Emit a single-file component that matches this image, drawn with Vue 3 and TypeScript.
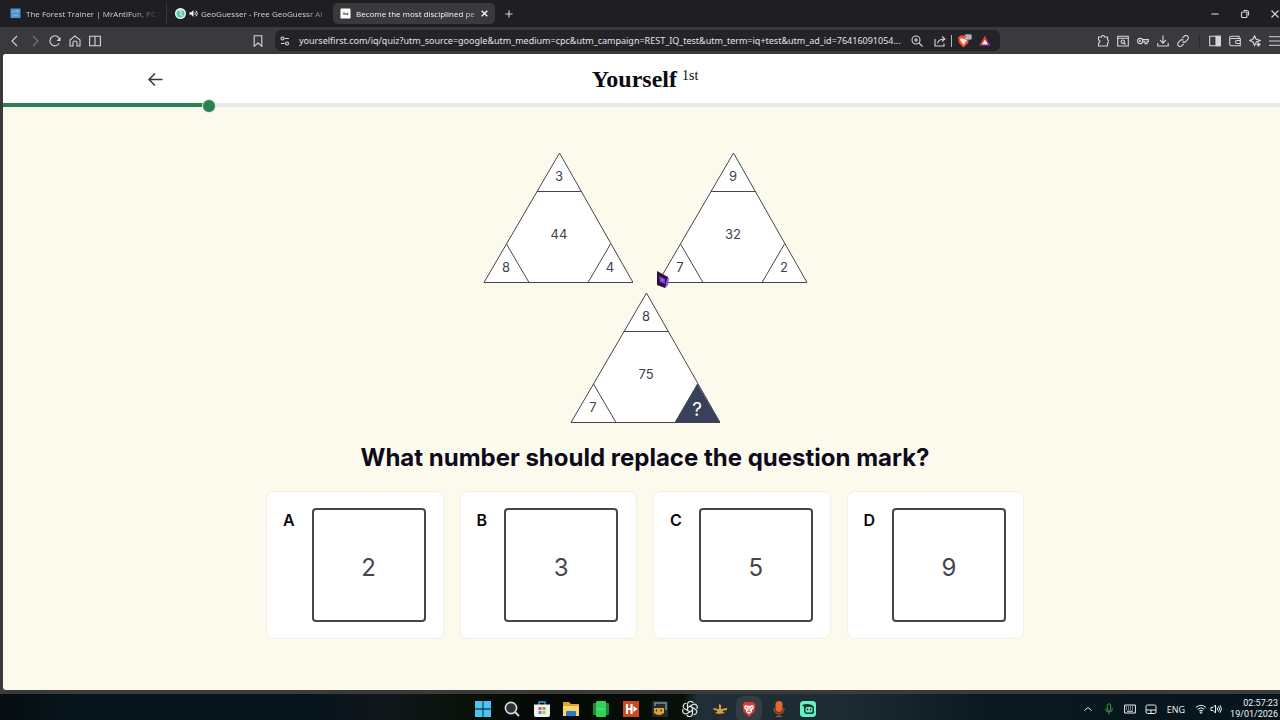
<script setup lang="ts">
import { computed, ref } from 'vue'

interface Puzzle {
  top: string
  left: string
  right: string
  centre: string
}

interface Answer {
  letter: string
  value: string
}

const puzzles: Puzzle[] = [
  { top: '3', left: '8', right: '4', centre: '44' },
  { top: '9', left: '7', right: '2', centre: '32' },
  { top: '8', left: '7', right: '?', centre: '75' },
]

const answers: Answer[] = [
  { letter: 'A', value: '2' },
  { letter: 'B', value: '3' },
  { letter: 'C', value: '5' },
  { letter: 'D', value: '9' },
]

const selected = ref<string | null>(null)
const answered = ref(5)
const total = 31
const progress = computed(() => (answered.value / total) * 100)

const address = ref(
  'yourselfirst.com/iq/quiz?utm_source=google&utm_medium=cpc&utm_campaign=REST_IQ_test&utm_term=iq+test&utm_ad_id=76416091054...',
)
</script>

<template>
  <div class="desktop">
    <div class="browser">
      <div class="tabs">
        <button class="tab first" type="button">
          <svg class="favicon" viewBox="0 0 12 12"><rect x="0.5" y="0.5" width="11" height="10.5" fill="#4d94cf" /><path d="M2 3h3v2H2zM6 2h4v3H6zM3 7h6v2H3z" fill="#6fb0e0" /></svg>
          <span class="tab-title">The Forest Trainer | MrAntiFun, PC Vi</span>
        </button>
        <button class="tab second" type="button">
          <svg class="favicon" viewBox="0 0 12 12"><circle cx="6" cy="6" r="6" fill="#eef8f5" /><circle cx="6" cy="6.3" r="4.4" fill="#5cc9b0" /><path d="M4 2.5 7 4 6 7l2.500 2" fill="none" stroke="#c9ece4" stroke-width="1.300" /></svg>
          <svg class="sound" viewBox="0 0 10 10"><path d="M0.500 3.500h2L5 1v8L2.500 6.500h-2z" fill="#ececee" /><path d="M6.300 3.300c1 1 1 2.400 0 3.400M7.600 1.800c2 1.800 2 4.600 0 6.400" fill="none" stroke="#ececee" stroke-width="1.100" /></svg>
          <span class="tab-title">GeoGuesser - Free GeoGuessr Al</span>
        </button>
        <button class="tab active" type="button">
          <svg class="favicon" viewBox="0 0 12 12"><rect x="0.500" y="0.500" width="11" height="11" rx="1" fill="#fff" /><text x="6" y="8" text-anchor="middle" class="favicon-text">1st</text></svg>
          <span class="tab-title">Become the most disciplined pe</span>
          <svg class="close" viewBox="0 0 8 8"><path d="m1.500 1.500 5 5m0-5-5 5" stroke="#f2f2f2" stroke-width="1.300" /></svg>
        </button>
        <button class="icon-button" type="button" aria-label="New tab">
          <svg viewBox="0 0 12 12"><path d="M6 2.500v7M2.500 6h7" /></svg>
        </button>
        <div class="window-controls">
          <button type="button" aria-label="Minimize"><svg viewBox="0 0 12 12"><path d="M2.500 6h7" /></svg></button>
          <button type="button" aria-label="Restore"><svg viewBox="0 0 12 12"><rect x="2.500" y="4" width="5.500" height="5.500" rx="1" /><path d="M4.500 2.500h3q2 0 2 2v3" /></svg></button>
          <button type="button" aria-label="Close"><svg viewBox="0 0 12 12"><path d="m2.500 2.500 7 7m0-7-7 7" /></svg></button>
        </div>
      </div>

      <div class="toolbar">
        <button class="icon-button" type="button" aria-label="Back"><svg viewBox="0 0 12 12"><path d="M8 1 3 6l5 5" /></svg></button>
        <button class="icon-button dim" type="button" aria-label="Forward"><svg viewBox="0 0 12 12"><path d="m4 1 5 5-5 5" /></svg></button>
        <button class="icon-button" type="button" aria-label="Reload"><svg viewBox="0 0 12 12"><path d="M10.300 8.300A5 5 0 1 1 10.600 4" /><path d="M11.500 2v4H7.500z" fill="#d6d6da" stroke="none" /></svg></button>
        <button class="icon-button" type="button" aria-label="Home"><svg viewBox="0 0 12 12"><path d="M1 5 6 .900 11 5v6H8V7.500q0-1.500-2-1.500t-2 1.500V11H1z" /></svg></button>
        <button class="icon-button" type="button" aria-label="Split view"><svg viewBox="0 0 12 12"><path d="M.600 1.200h10.800v9.600H.600zM6 1.200v9.600" /></svg></button>
        <button class="icon-button bookmark" type="button" aria-label="Bookmark"><svg viewBox="0 0 12 12"><path d="M2.200.800h7.600v10.400L6 8l-3.800 3.200z" /></svg></button>
        <div class="address-bar">
          <button class="icon-button" type="button" aria-label="Site settings"><svg viewBox="0 0 12 12"><path d="M5.500 3.500H10M2 8.500h3.500" /><circle cx="3.500" cy="3.500" r="1.500" /><circle cx="8" cy="8.500" r="1.500" /></svg></button>
          <input v-model="address" type="text" aria-label="Address" />
          <button class="icon-button zoom" type="button" aria-label="Zoom"><svg viewBox="0 0 12 12"><circle cx="5" cy="5" r="4" /><path d="m8 8 3.500 3.500M3 5h4M5 3v4" /></svg></button>
          <button class="icon-button" type="button" aria-label="Share"><svg viewBox="0 0 12 12"><path d="M1 4v7h9V8.500M3.500 8.500C4 5.500 6 4 10.500 4M8 1.300 10.900 4 8 6.700" /></svg></button>
          <span class="divider light"></span>
          <button class="icon-button brave" type="button" aria-label="Shields">
            <svg viewBox="0 0 16 14"><path d="M3.500 1.500h6l2.500 2-.800 5.500-4.700 4.500L2 9 1 3.500z" fill="#f0502c" stroke="none" /><path d="m4 4 2.500 1L9 4l1 2-2 3-1.500 2L5 9 3 6z" fill="#f8e0da" stroke="none" /><rect x="7.500" y="0" width="7.500" height="6" rx="2" fill="#85878c" stroke="none" /><text x="11.300" y="4.800" text-anchor="middle" class="badge">26</text></svg>
          </button>
          <button class="icon-button" type="button" aria-label="Rewards"><svg viewBox="0 0 12 12"><path d="M6 .500 6 4.500 3 9.500.300 11z" fill="#ff4724" stroke="none" /><path d="M6 .500 11.700 11 9 9.500 6 4.500z" fill="#c0246b" stroke="none" /><path d="M.300 11 3 9.500h6l2.700 1.500z" fill="#662d91" stroke="none" /><path d="m6 4.500 3 5H3z" fill="#fff" stroke="none" /></svg></button>
        </div>
        <div class="extensions">
          <button class="icon-button" type="button" aria-label="Extensions"><svg viewBox="0 0 12 12"><path d="M1.500 2h3a1.500 1.500 0 0 1 3 0h3v3a1.500 1.500 0 0 1 0 3v3h-9V8a1.500 1.500 0 0 0 0-3z" /></svg></button>
          <button class="icon-button" type="button" aria-label="Search history"><svg viewBox="0 0 12 12"><path d="M.700 1.200h10.600v9.800H.700zM.700 3.200h10.600" /><circle cx="5.800" cy="6.700" r="1.700" /><path d="m7 8 1.500 1.500" /></svg></button>
          <button class="icon-button" type="button" aria-label="Passwords"><svg viewBox="0 0 12 12"><circle cx="3.200" cy="6" r="2.600" /><circle cx="3" cy="6" r=".500" /><path d="M5.500 4.600h5.900v2.200H10v1.800H8V6.800H5.700" /></svg></button>
          <button class="icon-button" type="button" aria-label="Downloads"><svg viewBox="0 0 12 12"><path d="M6 .500v7.500M3 5.200 6 8.200l3-3M.800 8v3h10.400V8" /></svg></button>
          <button class="icon-button" type="button" aria-label="Copy link"><svg viewBox="0 0 12 12"><path d="m5.200 3.200 1.900-1.900a2.200 2.200 0 0 1 3.500 3.300L8.500 6.800q-1.500 1.200-3 0M6.800 8.800l-1.900 1.900a2.200 2.200 0 0 1-3.500-3.300l2.100-2.200q1.500-1.200 3 0" /></svg></button>
          <span class="divider"></span>
          <button class="icon-button" type="button" aria-label="Sidebar"><svg viewBox="0 0 12 12"><path d="M.700 1.200h10.600v9.600H.700z" /><path d="M7 1.200h4.300v9.600H7z" fill="#d6d6da" /></svg></button>
          <button class="icon-button" type="button" aria-label="Wallet"><svg viewBox="0 0 12 12"><path d="M10 3.500V1.200H2Q.700 1.200.700 2.500V9q0 1.800 1.800 1.800h8.800V3.500H1.500M11.300 5.500H8a1.500 1.500 0 0 0 0 3h3.300" /></svg></button>
          <button class="icon-button" type="button" aria-label="Assistant"><svg viewBox="0 0 12 12"><path d="M5.500.800 7 4l4 1.500L7.500 7l-2 3.500L4 7 .800 5.500 4 4z" /><path d="M9.500 7.500v4M7.500 9.500h4" stroke-width="1.600" /></svg></button>
          <button class="icon-button" type="button" aria-label="Menu"><svg viewBox="0 0 12 12"><path d="M0 1.800h12M0 6h12M0 10.200h12" /></svg></button>
        </div>
      </div>

      <div class="page">
        <header class="header">
          <div class="header-inner">
            <button class="back" type="button" aria-label="Previous question">
              <svg viewBox="0 0 20 20"><path d="M17.500 10.500H4M10 4.500l-6 6 6 6" /></svg>
            </button>
            <a class="logo" href="#"><strong>Yourself</strong><sup>1st</sup></a>
          </div>
        </header>
        <div class="track" role="progressbar" :aria-valuenow="answered" aria-valuemin="0" :aria-valuemax="total" aria-label="Quiz progress">
          <div class="fill" :style="{ width: progress + '%' }"></div>
        </div>

        <main class="quiz">
          <div class="puzzle">
            <svg v-for="(p, i) in puzzles" :key="i" class="triangle" viewBox="0 0 150 131">
              <path class="shape" d="M76.500 1 150 130.500H1z" />
              <path class="line" d="M54 39.500h44.500M23.500 92 46 130.500M127.500 92 105 130.500" />
              <path v-if="p.right === '?'" class="unknown" d="M127.500 92 150 130.500H105z" />
              <text x="76" y="29">{{ p.top }}</text>
              <text x="76" y="87">{{ p.centre }}</text>
              <text x="23" y="120">{{ p.left }}</text>
              <text x="127" :y="p.right === '?' ? 124 : 120" :class="{ mark: p.right === '?' }">{{ p.right }}</text>
            </svg>
            <svg class="pointer" viewBox="0 0 12 18"><path d="M0 0 11 6 11 13 8 17 0 14z" fill="#2b1238" /><path d="m10 7 2 0-1 7-3 3z" fill="#8b55e0" /><path d="m2 5 6 3v5L3 11z" fill="#8a34e8" /><path d="m4 7 3 2-2 2z" fill="#a965ff" /></svg>
          </div>

          <h1>What number should replace the question mark?</h1>

          <div class="answers">
            <button
              v-for="a in answers"
              :key="a.letter"
              class="answer"
              type="button"
              :aria-pressed="selected === a.letter"
              @click="selected = a.letter"
            >
              <span class="letter">{{ a.letter }}</span>
              <span class="value">{{ a.value }}</span>
            </button>
          </div>
        </main>
      </div>
    </div>

    <footer class="taskbar">
      <nav class="apps">
        <button type="button" aria-label="Start"><svg viewBox="0 0 16 16"><path d="M0 0h7.600v7.600H0zM8.400 0H16v7.600H8.400zM0 8.400h7.600V16H0zM8.400 8.400H16V16H8.400z" fill="#4cc2f5" /></svg></button>
        <button type="button" aria-label="Search"><svg viewBox="0 0 16 16"><circle cx="7" cy="7" r="5.600" fill="#30343a" stroke="#dadde0" stroke-width="1.600" /><path d="m11 11 4 4" stroke="#dadde0" stroke-width="1.800" /></svg></button>
        <button type="button" aria-label="Store"><svg viewBox="0 0 16 16"><path d="M5 4V1h6v3" fill="none" stroke="#3fa6e6" stroke-width="1.300" /><path d="M0 3.500h16V14q0 2-2 2H2q-2 0-2-2z" fill="#eef1f3" /><path d="M4.500 6h3v3h-3z" fill="#e0593c" /><path d="M8.500 6h3v3h-3z" fill="#7cae3a" /><path d="M4.500 10h3v3h-3z" fill="#3b9bdc" /><path d="M8.500 10h3v3h-3z" fill="#e8b12f" /></svg></button>
        <button type="button" aria-label="Files"><svg viewBox="0 0 16 16"><path d="M0 1h6l2 2h8v12H0z" fill="#e0a32e" /><path d="M0 5h16v10H0z" fill="#fbd568" /><path d="M3 11q0-1 1-1h8q1 0 1 1v4H3z" fill="#2878c8" /></svg></button>
        <button type="button" aria-label="Green app"><svg viewBox="0 0 16 16"><rect y="2" width="16" height="12" rx="1" fill="#178b38" /><rect x="3" width="10" height="16" rx="1" fill="#35cf5c" /><path d="M4 8h8" stroke="#65e584" /></svg></button>
        <button type="button" aria-label="Media app"><svg viewBox="0 0 16 16"><rect width="16" height="16" fill="#c84b22" /><path d="M4 3v10M8.500 3v10M4 8h4.500" fill="none" stroke="#fff" stroke-width="2.200" /><path d="m10.500 5 4 3-4 3z" fill="#fff" /></svg></button>
        <button type="button" aria-label="Games"><svg viewBox="0 0 16 16"><rect width="16" height="16" rx="1" fill="#252b2c" /><path d="M3 5V2h11v7" fill="none" stroke="#6c9b9b" stroke-width="1.500" /><path d="M2 7h10v5q-5 4-10 0z" fill="#e0a536" /><path d="M4.500 8.500v2M9 8.500v2" stroke="#2a2a20" stroke-width="1.300" /></svg></button>
        <button type="button" aria-label="Chat assistant"><svg viewBox="0 0 16 16"><g fill="none" stroke="#e6e8e8" stroke-width="1.200"><path id="petal" d="M8 5.200 5.500 6.700V3.300a3 3 0 0 1 5.700-1.200" /><use href="#petal" transform="rotate(60 8 8)" /><use href="#petal" transform="rotate(120 8 8)" /><use href="#petal" transform="rotate(180 8 8)" /><use href="#petal" transform="rotate(240 8 8)" /><use href="#petal" transform="rotate(300 8 8)" /></g></svg></button>
        <button type="button" aria-label="Plane game"><svg viewBox="0 0 16 16"><rect width="16" height="16" rx="1" fill="#262a33" /><path d="m1 7 6 1V3l2 1v4l6-1v2l-5 1 3 2-6 1-4-1 3-2-4-1z" fill="#cf9f45" /></svg></button>
        <button class="running" type="button" aria-label="Brave"><svg viewBox="0 0 16 16"><path d="M4 1h8l2.500 2.500-1 7L8 16l-5.500-5.500-1-7z" fill="#e8382d" /><path d="m4 4 4 1 4-1 1 3-2 2 0 2-3 2-3-2V9L3 7z" fill="#fff" /><path d="m4.500 6.500 2 .500M11.500 6.500l-2 .500M8 7v3M6 11l2-1 2 1" fill="none" stroke="#e8382d" /></svg></button>
        <button type="button" aria-label="Recorder"><svg viewBox="0 0 16 16"><rect x="4.500" width="7" height="11" rx="3.500" fill="#e5672c" /><path d="M3 7q0 5.500 5 5.500T13 7M8 12.500V15M5 15.500h6" fill="none" stroke="#a94b26" stroke-width="1.300" /></svg></button>
        <button type="button" aria-label="Streaming"><svg viewBox="0 0 16 16"><rect width="16" height="16" rx="3.500" fill="#67efc0" /><path d="M2 4q5-2 10 0l2 2v6l-2 1H6L4 11V6z" fill="#12382f" /><rect x="5.500" y="6" width="7" height="5.500" rx="1.500" fill="#67efc0" /><path d="M7.500 7.500v2M10.500 7.500v2" stroke="#12382f" stroke-width="1.300" /></svg></button>
      </nav>
      <div class="tray">
        <button type="button" aria-label="Hidden icons"><svg viewBox="0 0 12 12"><path d="m2.500 7.500 3.500-3 3.500 3" /></svg></button>
        <button type="button" aria-label="Microphone"><svg class="mic" viewBox="0 0 12 12"><rect x="4.300" y=".800" width="3.400" height="6.700" rx="1.700" /><path d="M2.500 5.500q0 3.500 3.500 3.500t3.500-3.500M6 9v2.500" /></svg></button>
        <button type="button" aria-label="Keyboard"><svg viewBox="0 0 12 12"><path d="M.600 2h10.800v8H.600z" /><path d="M2 4h8M2 6h8" stroke-dasharray="1 1" /><path d="M3 8.200h6" /></svg></button>
        <button type="button" aria-label="Touchpad"><svg viewBox="0 0 12 12"><rect x="1" y="2" width="10" height="8.500" rx="1.500" /><path d="M1 7h10M6 7v3.500" /></svg></button>
        <button class="language" type="button">ENG</button>
        <button class="network" type="button" aria-label="Network and volume">
          <svg viewBox="0 0 12 12"><path d="M.800 4.500q5.200-4.400 10.400 0M2.500 6.300q3.500-3 7 0M4.200 8q1.800-1.500 3.600 0" /><circle cx="6" cy="9.600" r=".800" /></svg>
          <svg viewBox="0 0 12 12"><path d="M1 4.500h2L5.500 2v8L3 7.500H1zM7 4.500q1.200 1.500 0 3M8.500 3.300q2.200 2.700 0 5.400M10 2.200q3 3.800 0 7.600" /></svg>
        </button>
        <button class="clock" type="button"><span>02:57:23</span><span>19/01/2026</span></button>
      </div>
    </footer>
  </div>
</template>

<style>
html,
body {
  margin: 0;
  overflow: hidden;
}
</style>

<style scoped>
.desktop,
.desktop * {
  box-sizing: border-box;
}

.desktop {
  display: flex;
  flex-direction: column;
  min-height: 100vh;
  overflow: hidden;
  background: #06131a;
  font-family: 'Open Sans', 'Noto Sans', sans-serif;
}

button {
  margin: 0;
  padding: 0;
  border: 0;
  background: none;
  color: inherit;
  font: inherit;
  cursor: pointer;
}

svg {
  display: block;
  flex: none;
}

/* The maximised window runs a few pixels past the right edge of the screen. */
.browser {
  display: flex;
  flex: 1;
  flex-direction: column;
  margin-right: -7px;
  background: #3a3a3d;
}

.tabs {
  display: flex;
  align-items: center;
  height: 27px;
  padding: 0 0 0 4px;
  background: #1e1e23;
  color: #d2d2d8;
  font-family: 'Open Sans', 'Noto Sans', sans-serif;
  font-size: 8px;
}

.tab {
  display: flex;
  align-items: center;
  gap: 5px;
  width: 162px;
  height: 21px;
  padding: 0 0 0 6px;
  text-align: left;
}

.tab.second {
  width: 167px;
  padding: 0 0 0 8px;
  border-left: 1px solid #36363c;
  gap: 3px;
}

.tab.active {
  padding: 0 6px 0 7px;
  border-radius: 5px;
  background: #3a3a3d;
  color: #f6f6f8;
}

.tab-title {
  flex: 1;
  min-width: 0;
  overflow: hidden;
  white-space: nowrap;
  mask-image: linear-gradient(to right, #000 104px, transparent 136px);
}

.favicon {
  width: 11px;
  height: 11px;
}

.favicon-text {
  font-family: 'Liberation Serif', serif;
  font-size: 5px;
  font-weight: 700;
}

.sound {
  width: 9px;
  height: 9px;
}

.close {
  width: 9px;
  height: 9px;
}

.icon-button {
  display: flex;
  flex: none;
  align-items: center;
  justify-content: center;
  width: 20px;
  height: 20px;
}

.icon-button svg,
.window-controls svg {
  width: 12px;
  height: 12px;
  fill: none;
  stroke: #d6d6da;
  stroke-width: 1.1;
}

.tabs > .icon-button {
  margin-left: 4px;
}

.dim {
  opacity: 0.4;
}

.window-controls {
  display: flex;
  margin: 0 -3px 0 auto;
}

.window-controls button {
  display: flex;
  align-items: center;
  justify-content: center;
  width: 30px;
  height: 27px;
}

.toolbar {
  display: flex;
  align-items: center;
  height: 27px;
  padding-left: 5px;
}

.bookmark {
  margin-left: 143px;
}

.address-bar {
  display: flex;
  flex: 1;
  align-items: center;
  max-width: 725px;
  height: 21px;
  margin-left: 7px;
  padding-right: 5px;
  border-radius: 6px;
  background: #242428;
}

.address-bar input {
  flex: 1;
  min-width: 0;
  margin: 0 0 0 4px;
  padding: 0;
  border: 0;
  outline: 0;
  background: none;
  color: #e2e2e6;
  font: 9px 'Noto Sans', 'Open Sans', sans-serif;
}

.zoom {
  margin-right: 3px;
}

.brave svg {
  width: 16px;
  height: 14px;
}

.badge {
  fill: #fff;
  stroke: none;
  font-size: 5px;
}

.divider {
  width: 1px;
  height: 12px;
  margin: 0 5px 0 6px;
  background: #28282b;
}

.divider.light {
  margin: 0 3px 0 1px;
  background: #b4b4b8;
}

.extensions {
  display: flex;
  align-items: center;
  margin-left: auto;
  padding-right: 2px;
}

.page {
  display: flex;
  flex: 1;
  flex-direction: column;
  margin: 0 0 4px 3px;
  border-radius: 3px;
  overflow: hidden;
  background: #fcfaec;
  font-family: Inter, 'Liberation Sans', sans-serif;
}

.header {
  background: #fff;
}

.header-inner {
  display: grid;
  grid-template-columns: 1fr auto 1fr;
  align-items: center;
  max-width: 1000px;
  height: 49px;
  margin: 0 auto;
}

.back {
  width: 20px;
  height: 20px;
}

.back svg {
  width: 20px;
  height: 20px;
  fill: none;
  stroke: #37373d;
  stroke-width: 1.5;
}

.logo {
  display: flex;
  align-items: flex-start;
  gap: 5px;
  color: #0b0b10;
  font-family: 'Liberation Serif', serif;
  font-size: 24px;
  line-height: 26px;
  text-decoration: none;
}

.logo sup {
  font-size: 14px;
  line-height: 20px;
}

.track {
  height: 4px;
  background: #e9e7e7;
}

.fill {
  position: relative;
  height: 4px;
  background: #288351;
}

.fill::after {
  position: absolute;
  top: -4px;
  right: -6px;
  width: 12px;
  height: 12px;
  border: 1px solid #e4f1e6;
  border-radius: 50%;
  background: #288351;
  content: '';
}

.header,
.track {
  flex: none;
}

.quiz {
  display: flex;
  flex-direction: column;
  align-items: center;
  padding: 45px 16px 24px;
}

.puzzle {
  position: relative;
  display: flex;
  flex-wrap: wrap;
  justify-content: center;
  gap: 9px 24px;
  width: 324px;
}

.triangle {
  width: 150px;
  height: 131px;
  font-size: 13px;
  text-anchor: middle;
  fill: #42424c;
}

.shape {
  fill: #fff;
  stroke: #45454d;
}

.line {
  fill: none;
  stroke: #45454d;
}

.unknown {
  fill: #38405c;
}

.mark {
  fill: #fff;
  font-size: 19px;
}

.pointer {
  position: absolute;
  top: 119px;
  left: 174px;
  width: 12px;
  height: 18px;
}

h1 {
  margin: 19px 0 17px;
  color: #0d0a1c;
  font-size: 24px;
  font-weight: 700;
  line-height: 32px;
  text-align: center;
}

.answers {
  display: grid;
  grid-template-columns: repeat(4, 1fr);
  gap: 16px;
  width: 100%;
  max-width: 758px;
}

.answer {
  display: flex;
  align-items: flex-start;
  gap: 17px;
  padding: 16px;
  border: 1px solid #f0efe8;
  border-radius: 8px;
  background: #fff;
}

.letter {
  color: #0a0a0e;
  font-size: 16px;
  font-weight: 600;
  line-height: 24px;
}

.value {
  display: flex;
  align-items: center;
  justify-content: center;
  width: 114px;
  height: 114px;
  padding-top: 4px;
  border: 2px solid #45454d;
  border-radius: 4px;
  color: #45454f;
  font-size: 24px;
}

.taskbar {
  display: grid;
  grid-template-columns: 1fr auto 1fr;
  align-items: center;
  height: 26px;
  margin-right: -11px;
  padding-top: 4px;
  background: linear-gradient(
    to right,
    #050d10 0%,
    #07161c 6%,
    #06141c 24%,
    #11171b 30%,
    #081209 36%,
    #050806 42%,
    #071008 53%,
    #1f2f37 54%,
    #1c2b32 66%,
    #0a1a20 76%,
    #04141a 100%
  );
}

.apps {
  display: flex;
  grid-column: 2;
  justify-content: space-between;
  width: 342px;
}

.apps button {
  width: 16px;
  height: 16px;
}

.apps svg {
  width: 16px;
  height: 16px;
}

.apps .running {
  border-radius: 3px;
  background: #353d44;
  box-shadow: 0 0 0 5px #353d44;
}

.tray {
  display: flex;
  align-items: center;
  justify-self: end;
  height: 21px;
  padding-right: 13px;
  color: #f0f3f4;
  font-size: 9px;
}

.tray button {
  display: flex;
  align-items: center;
  justify-content: center;
  min-width: 21px;
}

.tray svg {
  width: 12px;
  height: 12px;
  fill: none;
  stroke: #e9edef;
}

.tray .mic {
  stroke: #3f9a4a;
}

.tray .language {
  width: 30px;
}

.tray .network {
  gap: 3px;
  width: 35px;
}

.tray .clock {
  flex-direction: column;
  align-items: flex-end;
  width: 52px;
  font-family: Roboto, 'Open Sans', sans-serif;
  line-height: 11px;
}
</style>
